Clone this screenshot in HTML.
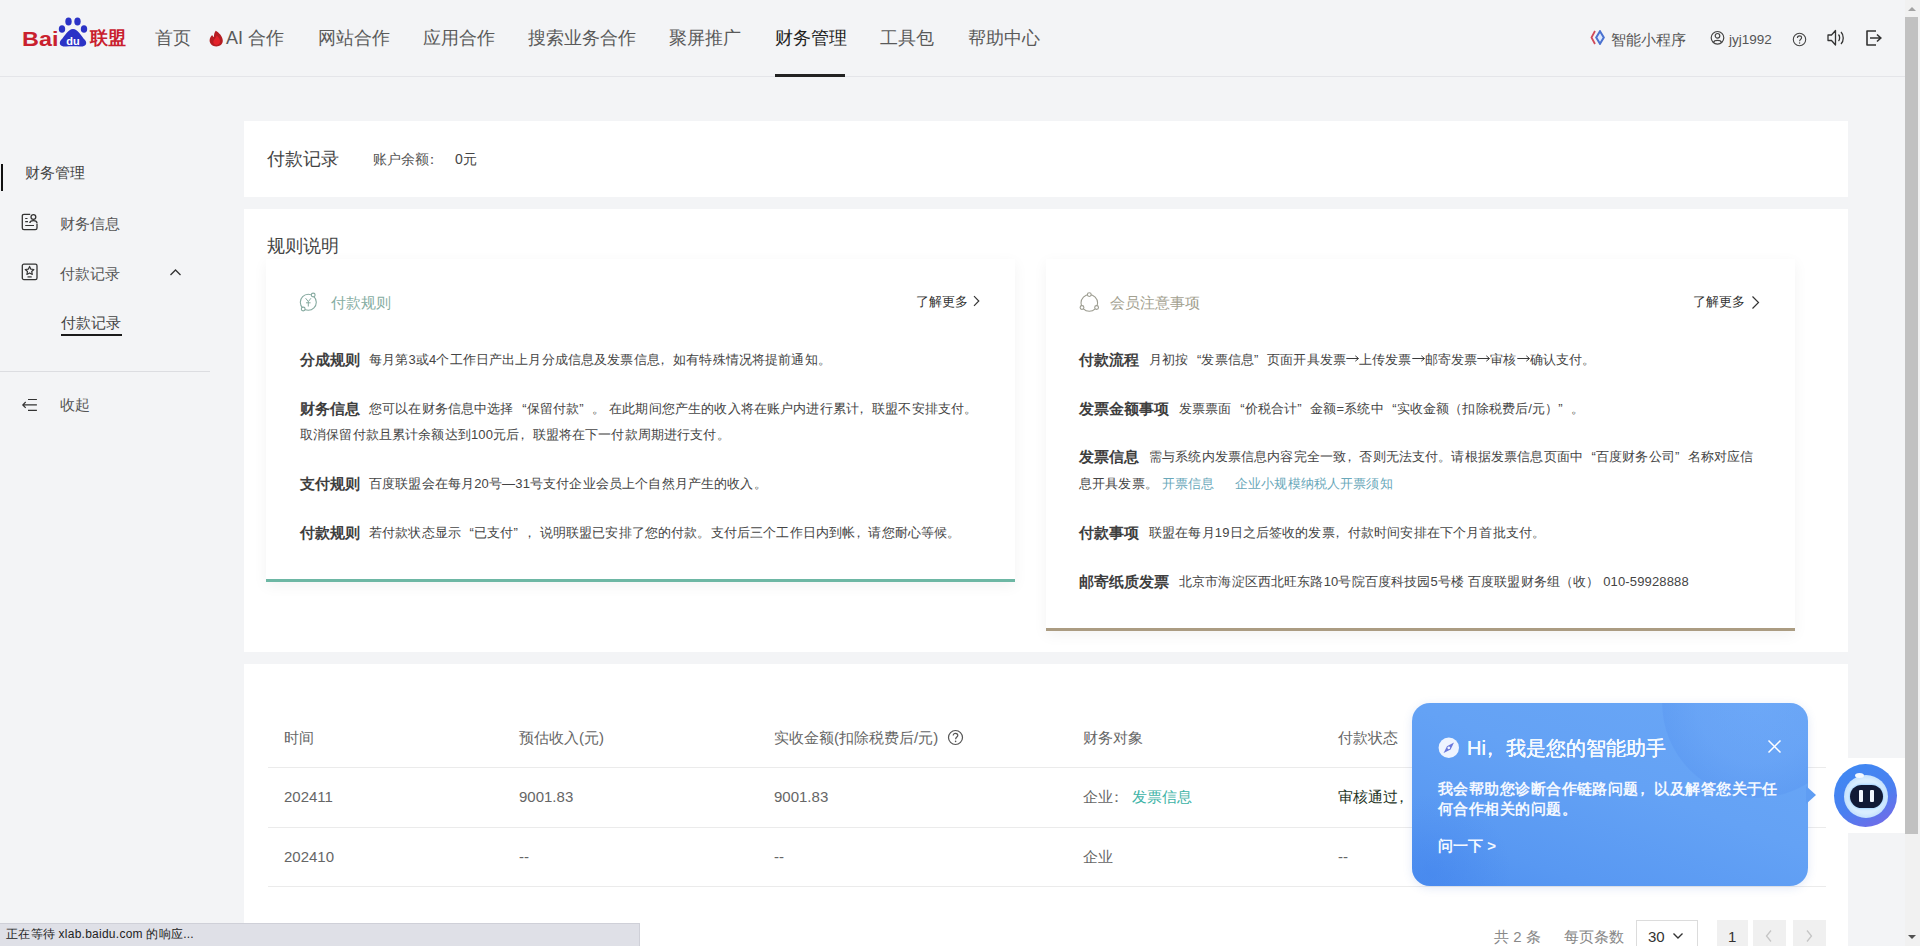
<!DOCTYPE html>
<html><head><meta charset="utf-8">
<style>
*{box-sizing:border-box;margin:0;padding:0}
html,body{width:1920px;height:946px;overflow:hidden}
body{position:relative;background:#f3f4f6;font-family:"Liberation Sans",sans-serif;color:#333}
.a{position:absolute;white-space:nowrap}
.hdr{left:0;top:0;width:1905px;height:77px;border-bottom:1px solid #e4e5e9;background:#f3f4f6}
.nav{top:26px;font-size:18px;color:#5a5a5a;line-height:24px}
.card{background:#fff}
.scroll{left:1905px;top:0;width:15px;height:946px;background:#f1f1f1}
.thumb{left:1905px;top:17px;width:13px;height:817px;background:#c1c1c1}
.hr{font-size:15px;color:#555;line-height:20px;top:30px}
.icard{background:#fff;box-shadow:0 4px 14px rgba(0,0,0,0.05)}
.ttl{top:293px;font-size:15px;line-height:20px}
.more{top:293px;font-size:13px;letter-spacing:0.1px;line-height:18px;color:#333}
.lb{font-size:15px;font-weight:bold;line-height:20px;color:#3e3e3e}
.bd{font-size:13px;letter-spacing:0.15px;line-height:18px;color:#444}
.th{top:728px;font-size:15px;line-height:20px;color:#666}
.td{font-size:15px;line-height:20px;color:#666}
.ql{display:inline-block;width:1em;text-align:right}.qr{display:inline-block;width:1em;text-align:left}
.ar{display:inline-block;width:13px;text-align:center}
.cm{display:inline-block;transform:translateX(-0.28em)}
</style></head><body>
<!-- header -->
<div class="a hdr"></div>
<!-- logo -->
<div class="a" style="left:21.5px;top:26.5px;font-size:20px;font-weight:bold;color:#c9202e;line-height:24px;transform:scaleX(1.17);transform-origin:0 0">Bai</div>
<svg class="a" style="left:56px;top:16px" width="34" height="32" viewBox="0 0 34 32">
<ellipse cx="12.5" cy="5.5" rx="3.2" ry="4" fill="#2b33c6"/>
<ellipse cx="21.5" cy="5.5" rx="3.2" ry="4" fill="#2b33c6"/>
<ellipse cx="6" cy="13" rx="3.2" ry="3.8" fill="#2b33c6"/>
<ellipse cx="28" cy="13" rx="3.2" ry="3.8" fill="#2b33c6"/>
<path d="M17 13 C12 13 9 20 5 24 C2 28 5 31 10 30.5 C14 30 20 30 24 30.5 C29 31 32 28 29 24 C25 20 22 13 17 13Z" fill="#2b33c6"/>
<text x="17" y="28.5" text-anchor="middle" font-family="Liberation Sans" font-weight="bold" font-size="11" fill="#fff">du</text>
</svg>
<div class="a" style="left:90px;top:27px;font-size:18px;font-weight:bold;color:#c9202e;line-height:22px;letter-spacing:0px">联盟</div>

<div class="a nav" style="left:155px">首页</div>
<svg class="a" style="left:209px;top:30px" width="15" height="17" viewBox="0 0 15 17"><path d="M6.8 0.8 C9.5 2.5 13.8 6 13.8 10.8 C13.8 14.2 11 16.5 7.3 16.5 C3.5 16.5 0.6 14 0.6 10.6 C0.6 8 2 6.3 3.2 5 C3.6 6.2 4.2 6.8 5 7 C4.8 4.6 5.5 2.5 6.8 0.8Z" fill="#b51d22"/><path d="M7.8 5.5 C9.8 7.5 11.5 9.5 11 12.3 C10.6 14.2 9 15 7.5 15 C5.5 15 4 13.5 4.3 11.5 C4.6 9.5 6.5 8.5 7.8 5.5Z" fill="#e3222a"/></svg>
<div class="a nav" style="left:226px">AI 合作</div>
<div class="a nav" style="left:318px">网站合作</div>
<div class="a nav" style="left:423px">应用合作</div>
<div class="a nav" style="left:528px">搜索业务合作</div>
<div class="a nav" style="left:669px">聚屏推广</div>
<div class="a nav" style="left:775px;color:#222">财务管理</div>
<div class="a nav" style="left:880px">工具包</div>
<div class="a nav" style="left:968px">帮助中心</div>
<div class="a" style="left:775px;top:74px;width:70px;height:3px;background:#222"></div>

<!-- header right -->
<svg class="a" style="left:1590px;top:30px" width="16" height="15" viewBox="0 0 16 15">
<path d="M5 1 L1.5 7.5 L5 14" fill="none" stroke="#d04a5a" stroke-width="1.8"/>
<path d="M10 1.2 L13.8 7.5 L10 13.8 L6.2 7.5 Z" fill="#dbe8ff" stroke="#4a72d0" stroke-width="2"/>
</svg>
<div class="a hr" style="left:1611px">智能小程序</div>
<svg class="a" style="left:1710px;top:30px" width="15" height="15" viewBox="0 0 15 15"><circle cx="7.5" cy="7.8" r="6.3" fill="none" stroke="#444" stroke-width="1.2"/><circle cx="7.5" cy="5.8" r="2.3" fill="none" stroke="#444" stroke-width="1.2"/><path d="M3.6 12.3 C4.5 9.8 10.5 9.8 11.4 12.3" fill="none" stroke="#444" stroke-width="1.2"/></svg>
<div class="a hr" style="left:1729px;font-size:13.5px">jyj1992</div>
<svg class="a" style="left:1792px;top:32px" width="15" height="15" viewBox="0 0 15 15"><circle cx="7.5" cy="7.5" r="6.2" fill="none" stroke="#444" stroke-width="1.1"/><path d="M5.4 6 C5.4 4.6 6.3 3.9 7.5 3.9 C8.7 3.9 9.6 4.6 9.6 5.8 C9.6 7.2 7.6 7.4 7.6 9.2" fill="none" stroke="#444" stroke-width="1.1"/><circle cx="7.6" cy="11" r="0.7" fill="#444"/></svg>
<svg class="a" style="left:1826px;top:29px" width="20" height="18" viewBox="0 0 20 18"><path d="M2 6 L5.5 6 L9.5 1.5 L9.5 16 L5.5 11.5 L2 11.5 Z" fill="none" stroke="#333" stroke-width="1.3" stroke-linejoin="round"/><path d="M12.5 5.5 C14 7 14 10.5 12.5 12" fill="none" stroke="#333" stroke-width="1.3"/><path d="M15 3 C18 6 18 12 15 15" fill="none" stroke="#333" stroke-width="1.3"/></svg>
<svg class="a" style="left:1864px;top:29px" width="20" height="18" viewBox="0 0 20 18"><path d="M12 2 L3 2 L3 16 L12 16" fill="none" stroke="#333" stroke-width="1.6" stroke-linejoin="round"/><path d="M6 9 L16.5 9 M13 5.5 L16.8 9 L13 12.5" fill="none" stroke="#333" stroke-width="1.6"/></svg>

<!-- sidebar -->
<div class="a" style="left:1px;top:164px;width:2px;height:27px;background:#111"></div>
<div class="a" style="left:25px;top:163px;font-size:15px;color:#444;line-height:20px">财务管理</div>
<svg class="a" style="left:21px;top:213px" width="18" height="18" viewBox="0 0 18 18"><path d="M9.2 1.3 H3 Q1.3 1.3 1.3 3 V15 Q1.3 16.7 3 16.7 H14.3 Q16 16.7 16 15 V10.5" fill="none" stroke="#333" stroke-width="1.3"/><circle cx="12.4" cy="4" r="2.4" fill="none" stroke="#333" stroke-width="1.3"/><path d="M8.8 10 C9 6.8 15.8 6.8 16 10" fill="none" stroke="#333" stroke-width="1.3"/><path d="M4.2 5.5 H6.5 M4.2 8.6 H7 M4.2 12.5 H13" stroke="#333" stroke-width="1.2"/></svg>
<div class="a" style="left:60px;top:214px;font-size:15px;color:#555;line-height:20px">财务信息</div>
<svg class="a" style="left:21px;top:263px" width="18" height="18" viewBox="0 0 18 18"><rect x="1.3" y="1.2" width="14.7" height="15.4" rx="1.6" fill="none" stroke="#333" stroke-width="1.3"/><path d="M8.6 3.4 L9.9 6.2 L12.9 6.5 L10.7 8.5 L11.3 11.4 L8.6 9.9 L5.9 11.4 L6.5 8.5 L4.3 6.5 L7.3 6.2 Z" fill="none" stroke="#333" stroke-width="1.2" stroke-linejoin="round"/><path d="M6.5 13.9 H10.7" stroke="#333" stroke-width="1.2"/></svg>
<div class="a" style="left:60px;top:264px;font-size:15px;color:#555;line-height:20px">付款记录</div>
<svg class="a" style="left:169px;top:268px" width="13" height="9" viewBox="0 0 13 9"><path d="M1.5 7 L6.5 2 L11.5 7" fill="none" stroke="#333" stroke-width="1.3"/></svg>
<div class="a" style="left:61px;top:313px;font-size:15px;color:#444;line-height:20px">付款记录</div>
<div class="a" style="left:61px;top:334px;width:61px;height:2px;background:#1a1a1a"></div>
<div class="a" style="left:0;top:371px;width:210px;height:1px;background:#dcdde1"></div>
<svg class="a" style="left:21px;top:397px" width="17" height="16" viewBox="0 0 17 16"><path d="M4.7 5 L1.8 7.9 L4.7 10.8 M2.2 7.9 H15.9 M7 2.5 H15.9 M7 13.3 H15.9" fill="none" stroke="#333" stroke-width="1.2"/></svg>
<div class="a" style="left:60px;top:395px;font-size:15px;color:#555;line-height:20px">收起</div>

<!-- cards -->
<div class="a card" style="left:244px;top:121px;width:1604px;height:76px"></div>
<div class="a card" style="left:244px;top:209px;width:1604px;height:443px"></div>
<div class="a card" style="left:244px;top:664px;width:1604px;height:300px"></div>


<!-- card1 -->
<div class="a" style="left:267px;top:147px;font-size:18px;line-height:24px;color:#444">付款记录</div>
<div class="a" style="left:373px;top:150px;font-size:14px;line-height:19px;color:#555">账户余额<span class="cm">：</span></div>
<div class="a" style="left:455px;top:150px;font-size:14px;line-height:19px;color:#444">0元</div>

<!-- card2 -->
<div class="a" style="left:267px;top:234px;font-size:18px;line-height:24px;color:#444">规则说明</div>

<div class="a icard" style="left:266px;top:259px;width:749px;height:323px;border-bottom:3px solid #6db7a4"></div>
<div class="a icard" style="left:1046px;top:259px;width:749px;height:372px;border-bottom:3px solid #ab9c82"></div>

<svg class="a" style="left:298px;top:292px" width="21" height="21" viewBox="0 0 21 21">
<circle cx="10.3" cy="10.2" r="8" fill="none" stroke="#86aaa0" stroke-width="1.1"/>
<circle cx="15.2" cy="3" r="1.9" fill="#fff" stroke="#86aaa0" stroke-width="1.1"/>
<circle cx="5.2" cy="17" r="1.9" fill="#fff" stroke="#86aaa0" stroke-width="1.1"/>
<path d="M7.6 6.2 L10.3 9.6 L13 6.2 M10.3 9.6 L10.3 14.5 M8 10.8 L12.6 10.8" fill="none" stroke="#86aaa0" stroke-width="1"/>
</svg>
<div class="a ttl" style="left:331px;color:#86ada2">付款规则</div>
<div class="a more" style="left:916px">了解更多</div>
<svg class="a" style="left:971px;top:295px" width="10" height="12" viewBox="0 0 10 12"><path d="M3 1.2 L7.8 6 L3 10.8" fill="none" stroke="#333" stroke-width="1.15"/></svg>

<div class="a lb" style="left:300px;top:350px">分成规则</div>
<div class="a bd" style="left:369px;top:351px">每月第3或4个工作日产出上月分成信息及发票信息<span class="cm">，</span>如有特殊情况将提前通知。</div>
<div class="a lb" style="left:300px;top:399px">财务信息</div>
<div class="a bd" style="left:369px;top:400px">您可以在财务信息中选择<span class="ql">“</span>保留付款<span class="qr">”</span>。 在此期间您产生的收入将在账户内进行累计<span class="cm">，</span>联盟不安排支付。</div>
<div class="a bd" style="left:300px;top:426px">取消保留付款且累计余额达到100元后<span class="cm">，</span>联盟将在下一付款周期进行支付。</div>
<div class="a lb" style="left:300px;top:474px">支付规则</div>
<div class="a bd" style="left:369px;top:475px">百度联盟会在每月20号—31号支付企业会员上个自然月产生的收入。</div>
<div class="a lb" style="left:300px;top:523px">付款规则</div>
<div class="a bd" style="left:369px;top:524px">若付款状态显示<span class="ql">“</span>已支付<span class="qr">”</span><span class="cm">，</span>说明联盟已安排了您的付款。支付后三个工作日内到帐<span class="cm">，</span>请您耐心等候。</div>

<svg class="a" style="left:1079px;top:292px" width="21" height="21" viewBox="0 0 21 21">
<circle cx="10.3" cy="10.9" r="8.3" fill="none" stroke="#9c9c90" stroke-width="1.1"/>
<circle cx="10.3" cy="2.6" r="1.9" fill="#fff" stroke="#9c9c90" stroke-width="1.1"/>
<circle cx="3" cy="15.5" r="1.9" fill="#fff" stroke="#9c9c90" stroke-width="1.1"/>
<circle cx="17.6" cy="15.5" r="1.9" fill="#fff" stroke="#9c9c90" stroke-width="1.1"/>
</svg>
<div class="a ttl" style="left:1110px;color:#a3a190">会员注意事项</div>
<div class="a more" style="left:1693px">了解更多</div>
<svg class="a" style="left:1750px;top:295px" width="10" height="15" viewBox="0 0 10 15"><path d="M2.5 1.5 L8.5 7.5 L2.5 13.5" fill="none" stroke="#333" stroke-width="1.2"/></svg>

<div class="a lb" style="left:1079px;top:350px">付款流程</div>
<div class="a bd" style="left:1149px;top:351px">月初按<span class="ql">“</span>发票信息<span class="qr">”</span>页面开具发票<span class="ar"><svg width="13" height="13" viewBox="0 0 13 13" style="vertical-align:-1px"><path d="M0.3 6.5 L12.3 6.5 M9.3 3.8 L12.5 6.5 L9.3 9.2" fill="none" stroke="#3a3a3a" stroke-width="1"/></svg></span>上传发票<span class="ar"><svg width="13" height="13" viewBox="0 0 13 13" style="vertical-align:-1px"><path d="M0.3 6.5 L12.3 6.5 M9.3 3.8 L12.5 6.5 L9.3 9.2" fill="none" stroke="#3a3a3a" stroke-width="1"/></svg></span>邮寄发票<span class="ar"><svg width="13" height="13" viewBox="0 0 13 13" style="vertical-align:-1px"><path d="M0.3 6.5 L12.3 6.5 M9.3 3.8 L12.5 6.5 L9.3 9.2" fill="none" stroke="#3a3a3a" stroke-width="1"/></svg></span>审核<span class="ar"><svg width="13" height="13" viewBox="0 0 13 13" style="vertical-align:-1px"><path d="M0.3 6.5 L12.3 6.5 M9.3 3.8 L12.5 6.5 L9.3 9.2" fill="none" stroke="#3a3a3a" stroke-width="1"/></svg></span>确认支付。</div>
<div class="a lb" style="left:1079px;top:399px">发票金额事项</div>
<div class="a bd" style="left:1179px;top:400px">发票票面<span class="ql">“</span>价税合计<span class="qr">”</span>金额=系统中<span class="ql">“</span>实收金额（扣除税费后/元）<span class="qr">”</span>。</div>
<div class="a lb" style="left:1079px;top:447px">发票信息</div>
<div class="a bd" style="left:1149px;top:448px">需与系统内发票信息内容完全一致<span class="cm">，</span>否则无法支付。请根据发票信息页面中<span class="ql">“</span>百度财务公司<span class="qr">”</span>名称对应信</div>
<div class="a bd" style="left:1079px;top:475px">息开具发票。</div>
<div class="a bd" style="left:1162px;top:475px;color:#6aa8ba">开票信息</div>
<div class="a bd" style="left:1235px;top:475px;color:#6aa8ba">企业小规模纳税人开票须知</div>
<div class="a lb" style="left:1079px;top:523px">付款事项</div>
<div class="a bd" style="left:1149px;top:524px">联盟在每月19日之后签收的发票<span class="cm">，</span>付款时间安排在下个月首批支付。</div>
<div class="a lb" style="left:1079px;top:572px">邮寄纸质发票</div>
<div class="a bd" style="left:1179px;top:573px">北京市海淀区西北旺东路10号院百度科技园5号楼 百度联盟财务组（收） 010-59928888</div>

<!-- table -->
<div class="a th" style="left:284px">时间</div>
<div class="a th" style="left:519px">预估收入(元)</div>
<div class="a th" style="left:774px">实收金额(扣除税费后/元)</div>
<svg class="a" style="left:947px;top:729px" width="17" height="17" viewBox="0 0 17 17"><circle cx="8.5" cy="8.5" r="7" fill="none" stroke="#555" stroke-width="1.2"/><path d="M6.2 6.6 C6.2 5 7.2 4.3 8.5 4.3 C9.8 4.3 10.8 5.1 10.8 6.4 C10.8 8 8.6 8.2 8.6 10.3" fill="none" stroke="#555" stroke-width="1.2"/><circle cx="8.6" cy="12.4" r="0.8" fill="#555"/></svg>
<div class="a th" style="left:1083px">财务对象</div>
<div class="a th" style="left:1338px">付款状态</div>
<div class="a" style="left:268px;top:767px;width:1558px;height:1px;background:#ebebeb"></div>
<div class="a td" style="left:284px;top:787px">202411</div>
<div class="a td" style="left:519px;top:787px">9001.83</div>
<div class="a td" style="left:774px;top:787px">9001.83</div>
<div class="a td" style="left:1083px;top:787px">企业<span class="cm">：</span></div>
<div class="a td" style="left:1132px;top:787px;color:#3db3a6">发票信息</div>
<div class="a td" style="left:1338px;top:787px;color:#243324">审核通过<span class="cm">，</span></div>
<div class="a" style="left:268px;top:827px;width:1558px;height:1px;background:#ebebeb"></div>
<div class="a td" style="left:284px;top:847px">202410</div>
<div class="a td" style="left:519px;top:847px">--</div>
<div class="a td" style="left:774px;top:847px">--</div>
<div class="a td" style="left:1083px;top:847px">企业</div>
<div class="a td" style="left:1338px;top:847px">--</div>
<div class="a" style="left:268px;top:886px;width:1558px;height:1px;background:#ebebeb"></div>

<!-- pagination -->
<div class="a" style="left:1494px;top:927px;font-size:15px;line-height:20px;color:#888">共 2 条</div>
<div class="a" style="left:1564px;top:927px;font-size:15px;line-height:20px;color:#888">每页条数</div>
<div class="a" style="left:1636px;top:920px;width:62px;height:40px;border:1px solid #dcdcdc;background:#fff"></div>
<div class="a" style="left:1648px;top:927px;font-size:15px;line-height:20px;color:#333">30</div>
<svg class="a" style="left:1672px;top:932px" width="12" height="8" viewBox="0 0 12 8"><path d="M1.5 1.5 L6 6 L10.5 1.5" fill="none" stroke="#333" stroke-width="1.4"/></svg>
<div class="a" style="left:1717px;top:920px;width:31px;height:40px;background:#f0f0f0"></div>
<div class="a" style="left:1728px;top:927px;font-size:15px;line-height:20px;color:#333">1</div>
<div class="a" style="left:1753px;top:920px;width:33px;height:40px;background:#f0f0f0"></div>
<svg class="a" style="left:1764px;top:929px" width="10" height="14" viewBox="0 0 10 14"><path d="M7 1.5 L2.5 7 L7 12.5" fill="none" stroke="#c5c5c5" stroke-width="1.3"/></svg>
<div class="a" style="left:1793px;top:920px;width:33px;height:40px;background:#f0f0f0"></div>
<svg class="a" style="left:1804px;top:929px" width="10" height="14" viewBox="0 0 10 14"><path d="M3 1.5 L7.5 7 L3 12.5" fill="none" stroke="#c5c5c5" stroke-width="1.3"/></svg>

<!-- status bar -->
<div class="a" style="left:0;top:923px;width:640px;height:23px;background:#dfe0e7;border-top:1px solid #cfd0d8;border-right:1px solid #cfd0d8"></div>
<div class="a" style="left:6px;top:927px;font-size:12px;letter-spacing:0.25px;line-height:15px;color:#222">正在等待 xlab.baidu.com 的响应...</div>

<!-- robot -->
<div class="a" style="left:1848px;top:758px;width:57px;height:75px;background:#fff"></div>
<div class="a" style="left:1834px;top:764px;width:63px;height:63px;border-radius:50%;background:linear-gradient(150deg,#3d8af3 0%,#4a80f0 55%,#7b66e6 100%)"></div>
<div class="a" style="left:1844px;top:775px;width:44px;height:43px;border-radius:50%;background:radial-gradient(circle,#d9eeff 55%,#9cc8f8 100%)"></div>
<div class="a" style="left:1855px;top:773px;width:9px;height:5px;border-radius:50%;background:#f4faff"></div>
<div class="a" style="left:1850px;top:785px;width:33px;height:23px;border-radius:12px;background:#111a36;box-shadow:0 0 2px 1px #a5d4ff"></div>
<div class="a" style="left:1859px;top:790px;width:4px;height:12px;background:#f2f6ff;border-radius:1px"></div>
<div class="a" style="left:1870px;top:790px;width:4px;height:12px;background:#f2f6ff;border-radius:1px"></div>

<!-- popup -->
<div class="a" style="left:1412px;top:703px;width:396px;height:183px;border-radius:18px;background:linear-gradient(200deg,#6aa7f6 0%,#64a2f5 45%,#5898f2 80%,#4d8ff0 100%);box-shadow:0 2px 10px rgba(60,110,200,0.15)"></div>
<div class="a" style="left:1412px;top:703px;width:396px;height:183px;border-radius:18px;overflow:hidden">
<div style="position:absolute;left:250px;top:-95px;width:190px;height:190px;border-radius:50%;background:radial-gradient(circle,rgba(115,170,250,0.3) 0%,rgba(105,160,245,0.25) 45%,rgba(75,135,235,0.22) 70%,rgba(75,135,235,0) 72%)"></div>
<div style="position:absolute;left:-60px;top:90px;width:160px;height:160px;border-radius:50%;background:radial-gradient(circle,rgba(60,125,235,0.35) 0%,rgba(60,125,235,0) 70%)"></div>
</div>
<svg class="a" style="left:1806px;top:783px" width="12" height="24" viewBox="0 0 12 24"><path d="M0 3 L10 12 L0 21Z" fill="#5f9df3"/></svg>
<svg class="a" style="left:1438px;top:737px" width="22" height="22" viewBox="0 0 22 22"><circle cx="10.8" cy="10.8" r="10.2" fill="#eef4ff"/><path d="M16 5.6 L12.6 12.4 L5.6 16 L9 9.2Z" fill="#6a78dc"/><circle cx="10.8" cy="10.8" r="1.4" fill="#eef4ff"/></svg>
<div class="a" style="left:1467px;top:736px;font-size:20px;line-height:24px;color:#f4f9ff;font-weight:normal;text-shadow:0 0 0.6px #fff,0 0 0.6px #fff">Hi<span class="cm">，</span>我是您的智能助手</div>
<svg class="a" style="left:1767px;top:739px" width="15" height="15" viewBox="0 0 15 15"><path d="M1.5 1.5 L13.5 13.5 M13.5 1.5 L1.5 13.5" stroke="#fff" stroke-width="1.5"/></svg>
<div class="a" style="left:1438px;top:779px;font-size:15px;letter-spacing:0.45px;line-height:20px;color:#f4f8ff;font-weight:bold">我会帮助您诊断合作链路问题<span class="cm">，</span>以及解答您关于任</div>
<div class="a" style="left:1438px;top:799px;font-size:15px;letter-spacing:0.45px;line-height:20px;color:#f4f8ff;font-weight:bold">何合作相关的问题。</div>
<div class="a" style="left:1438px;top:836px;font-size:15px;line-height:20px;color:#f4f8ff;font-weight:bold">问一下 &gt;</div>


<div class="a scroll"></div>
<div class="a thumb"></div>
<svg class="a" style="left:1906px;top:5px" width="12" height="8" viewBox="0 0 12 8"><path d="M2 6 L6 2 L10 6Z" fill="#a3a3a3"/></svg>
<svg class="a" style="left:1906px;top:933px" width="12" height="8" viewBox="0 0 12 8"><path d="M2 2 L6 6 L10 2Z" fill="#505050"/></svg>
</body></html>
